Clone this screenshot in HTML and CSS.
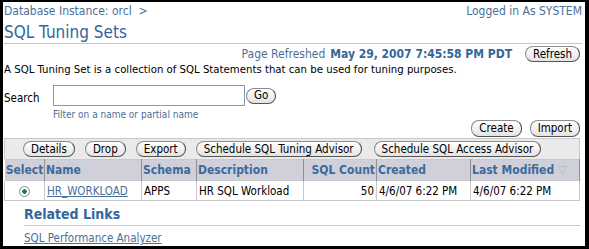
FILE: index.html
```html
<!DOCTYPE html>
<html>
<head>
    <link rel="stylesheet" href="styles.css">
</head>
<body>

    <div class="topbar">
        <div class="crumbs"><a class="crumb" href="#">Database Instance: orcl</a> &nbsp;&gt;</div>
        <div class="login">Logged in As SYSTEM</div>
    </div>

    <h1 class="title">SQL Tuning Sets</h1>

    <div class="refresh_row">
        <span class="refresh_label">Page Refreshed</span>
        <span class="refresh_date">May 29, 2007 7:45:58 PM PDT</span>
        <button class="btn">Refresh</button>
    </div>

    <p class="intro">A SQL Tuning Set is a collection of SQL Statements that can be used for tuning purposes.</p>

    <div class="search">
        <label class="search_label">Search</label>
        <div class="search_field">
            <div class="search_inputs">
                <input class="search_input" type="text">
                <button class="btn">Go</button>
            </div>
            <div class="hint">Filter on a name or partial name</div>
        </div>
    </div>

    <div class="actions">
        <button class="btn">Create</button>
        <button class="btn">Import</button>
    </div>

    <div class="table_wrap">
        <div class="toolbar">
            <button class="btn">Details</button>
            <button class="btn">Drop</button>
            <button class="btn">Export</button>
            <button class="btn">Schedule SQL Tuning Advisor</button>
            <button class="btn">Schedule SQL Access Advisor</button>
        </div>
        <table class="sets">
            <colgroup>
                <col style="width: 40px">
                <col style="width: 97px">
                <col style="width: 55px">
                <col style="width: 107px">
                <col style="width: 73px">
                <col style="width: 94px">
                <col>
            </colgroup>
            <tr>
                <th class="sel">Select</th>
                <th>Name</th>
                <th>Schema</th>
                <th>Description</th>
                <th class="num">SQL Count</th>
                <th>Created</th>
                <th>Last Modified <span class="sort">&#9661;</span></th>
            </tr>
            <tr>
                <td class="sel"><span class="radio"></span></td>
                <td><a href="#">HR_WORKLOAD</a></td>
                <td>APPS</td>
                <td>HR SQL Workload</td>
                <td class="num">50</td>
                <td>4/6/07 6:22 PM</td>
                <td>4/6/07 6:22 PM</td>
            </tr>
        </table>
    </div>

    <div class="related">
        <h2 class="related_title">Related Links</h2>
        <a class="related_link" href="#">SQL Performance Analyzer</a>
    </div>

</body>
</html>
```

FILE: styles.css
```css
/*Page frame.*/
html, body {
    margin: 0;
    height: 100%;
}

body {
    box-sizing: border-box;
    border: 3px solid #000000;
    border-top-width: 2px;
    border-right-width: 4px;
    padding: 0 3px 0 1px;
    background-color: #ffffff;
    color: #000000;
    font-family: "DejaVu Sans Condensed", "DejaVu Sans", sans-serif;
    font-size: 11.3px;
    overflow: hidden;
}

a {
    color: #4a6f99;
}

/*Header.*/
.topbar {
    display: flex;
    justify-content: space-between;
    padding-top: 2px;
    font-size: 12px;
    color: #4a6f99;
}

.crumb {
    text-decoration: none;
}

.title {
    margin: 4px 0 0 0;
    padding-bottom: 1px;
    border-bottom: 1px solid #c5c5c5;
    font-size: 17px;
    font-weight: normal;
    color: #336699;
}

.refresh_row {
    display: flex;
    justify-content: flex-end;
    align-items: center;
    gap: 5px;
    margin-top: 2px;
    margin-right: 2px;
    color: #4a6f99;
    font-size: 12px;
}

.refresh_date {
    font-weight: bold;
    color: #336699;
    margin-right: 8px;
}

.intro {
    margin: 1px 0 0 0;
}

/*Buttons.*/
.btn {
    font-family: inherit;
    font-size: 11.5px;
    color: #000000;
    height: 16px;
    padding: 0 7px;
    border: 1px solid #8c8c8c;
    border-right-color: #444444;
    border-bottom-color: #555555;
    border-radius: 8px;
    background: linear-gradient(#ffffff, #e4e4e4);
    line-height: 13px;
}

/*Search.*/
.search {
    display: flex;
    align-items: flex-start;
    margin-top: 9px;
}

.search_label {
    width: 49px;
    padding-top: 6px;
    font-size: 11.5px;
}

.search_inputs {
    display: flex;
    align-items: center;
    gap: 1px;
}

.search_input {
    box-sizing: border-box;
    width: 192px;
    height: 21px;
    margin: 0;
    border: 1px solid #7f9db9;
}

.hint {
    margin-top: 3px;
    font-size: 10px;
    color: #4a6f99;
}

.actions {
    display: flex;
    justify-content: flex-end;
    gap: 8px;
    margin-top: 0;
    margin-right: 2px;
}

.actions .btn {
    height: 17px;
}

/*Table.*/
.table_wrap {
    margin-top: 1px;
    width: 576px;
}

.toolbar {
    display: flex;
    gap: 10px;
    padding: 2px 0 2px 18px;
    background-color: #eaeaea;
    border: 1px solid #c9c9c9;
    border-bottom: none;
}

.toolbar .btn:nth-child(5) {
    margin-left: 2px;
}

.sets {
    width: 100%;
    border-collapse: collapse;
    table-layout: fixed;
    border: 1px solid #c9c9c9;
}

.sets th {
    height: 20px;
    padding: 0 1px;
    text-align: left;
    font-size: 12px;
    font-weight: bold;
    color: #3d6a9c;
    background-color: #cfd0da;
    border-left: 1px solid #ffffff;
    border-right: 1px solid #8f8f99;
    white-space: nowrap;
}

.sets td {
    height: 19px;
    padding: 0 2px;
    font-size: 11.5px;
    border: 1px solid #c9c9c9;
    white-space: nowrap;
}

.sets .num {
    text-align: right;
}

.sets .sel {
    text-align: center;
    padding: 0;
}

.sort {
    font-weight: normal;
    color: #b8b8c8;
}

.radio {
    display: inline-block;
    box-sizing: border-box;
    width: 11px;
    height: 11px;
    border: 1px solid #6e8fa8;
    border-radius: 50%;
    background: radial-gradient(circle, #2a7a2a 0, #2a7a2a 2px, #ffffff 2.5px);
    vertical-align: middle;
}

/*Related links.*/
.related {
    padding-left: 20px;
    margin-top: 5px;
    width: 556px;
}

.related_title {
    margin: 0;
    padding-bottom: 3px;
    border-bottom: 1px solid #c9c9c9;
    font-size: 14px;
    font-weight: bold;
    color: #336699;
}

.related_link {
    display: inline-block;
    margin-top: 5px;
    font-size: 11.5px;
}
```
